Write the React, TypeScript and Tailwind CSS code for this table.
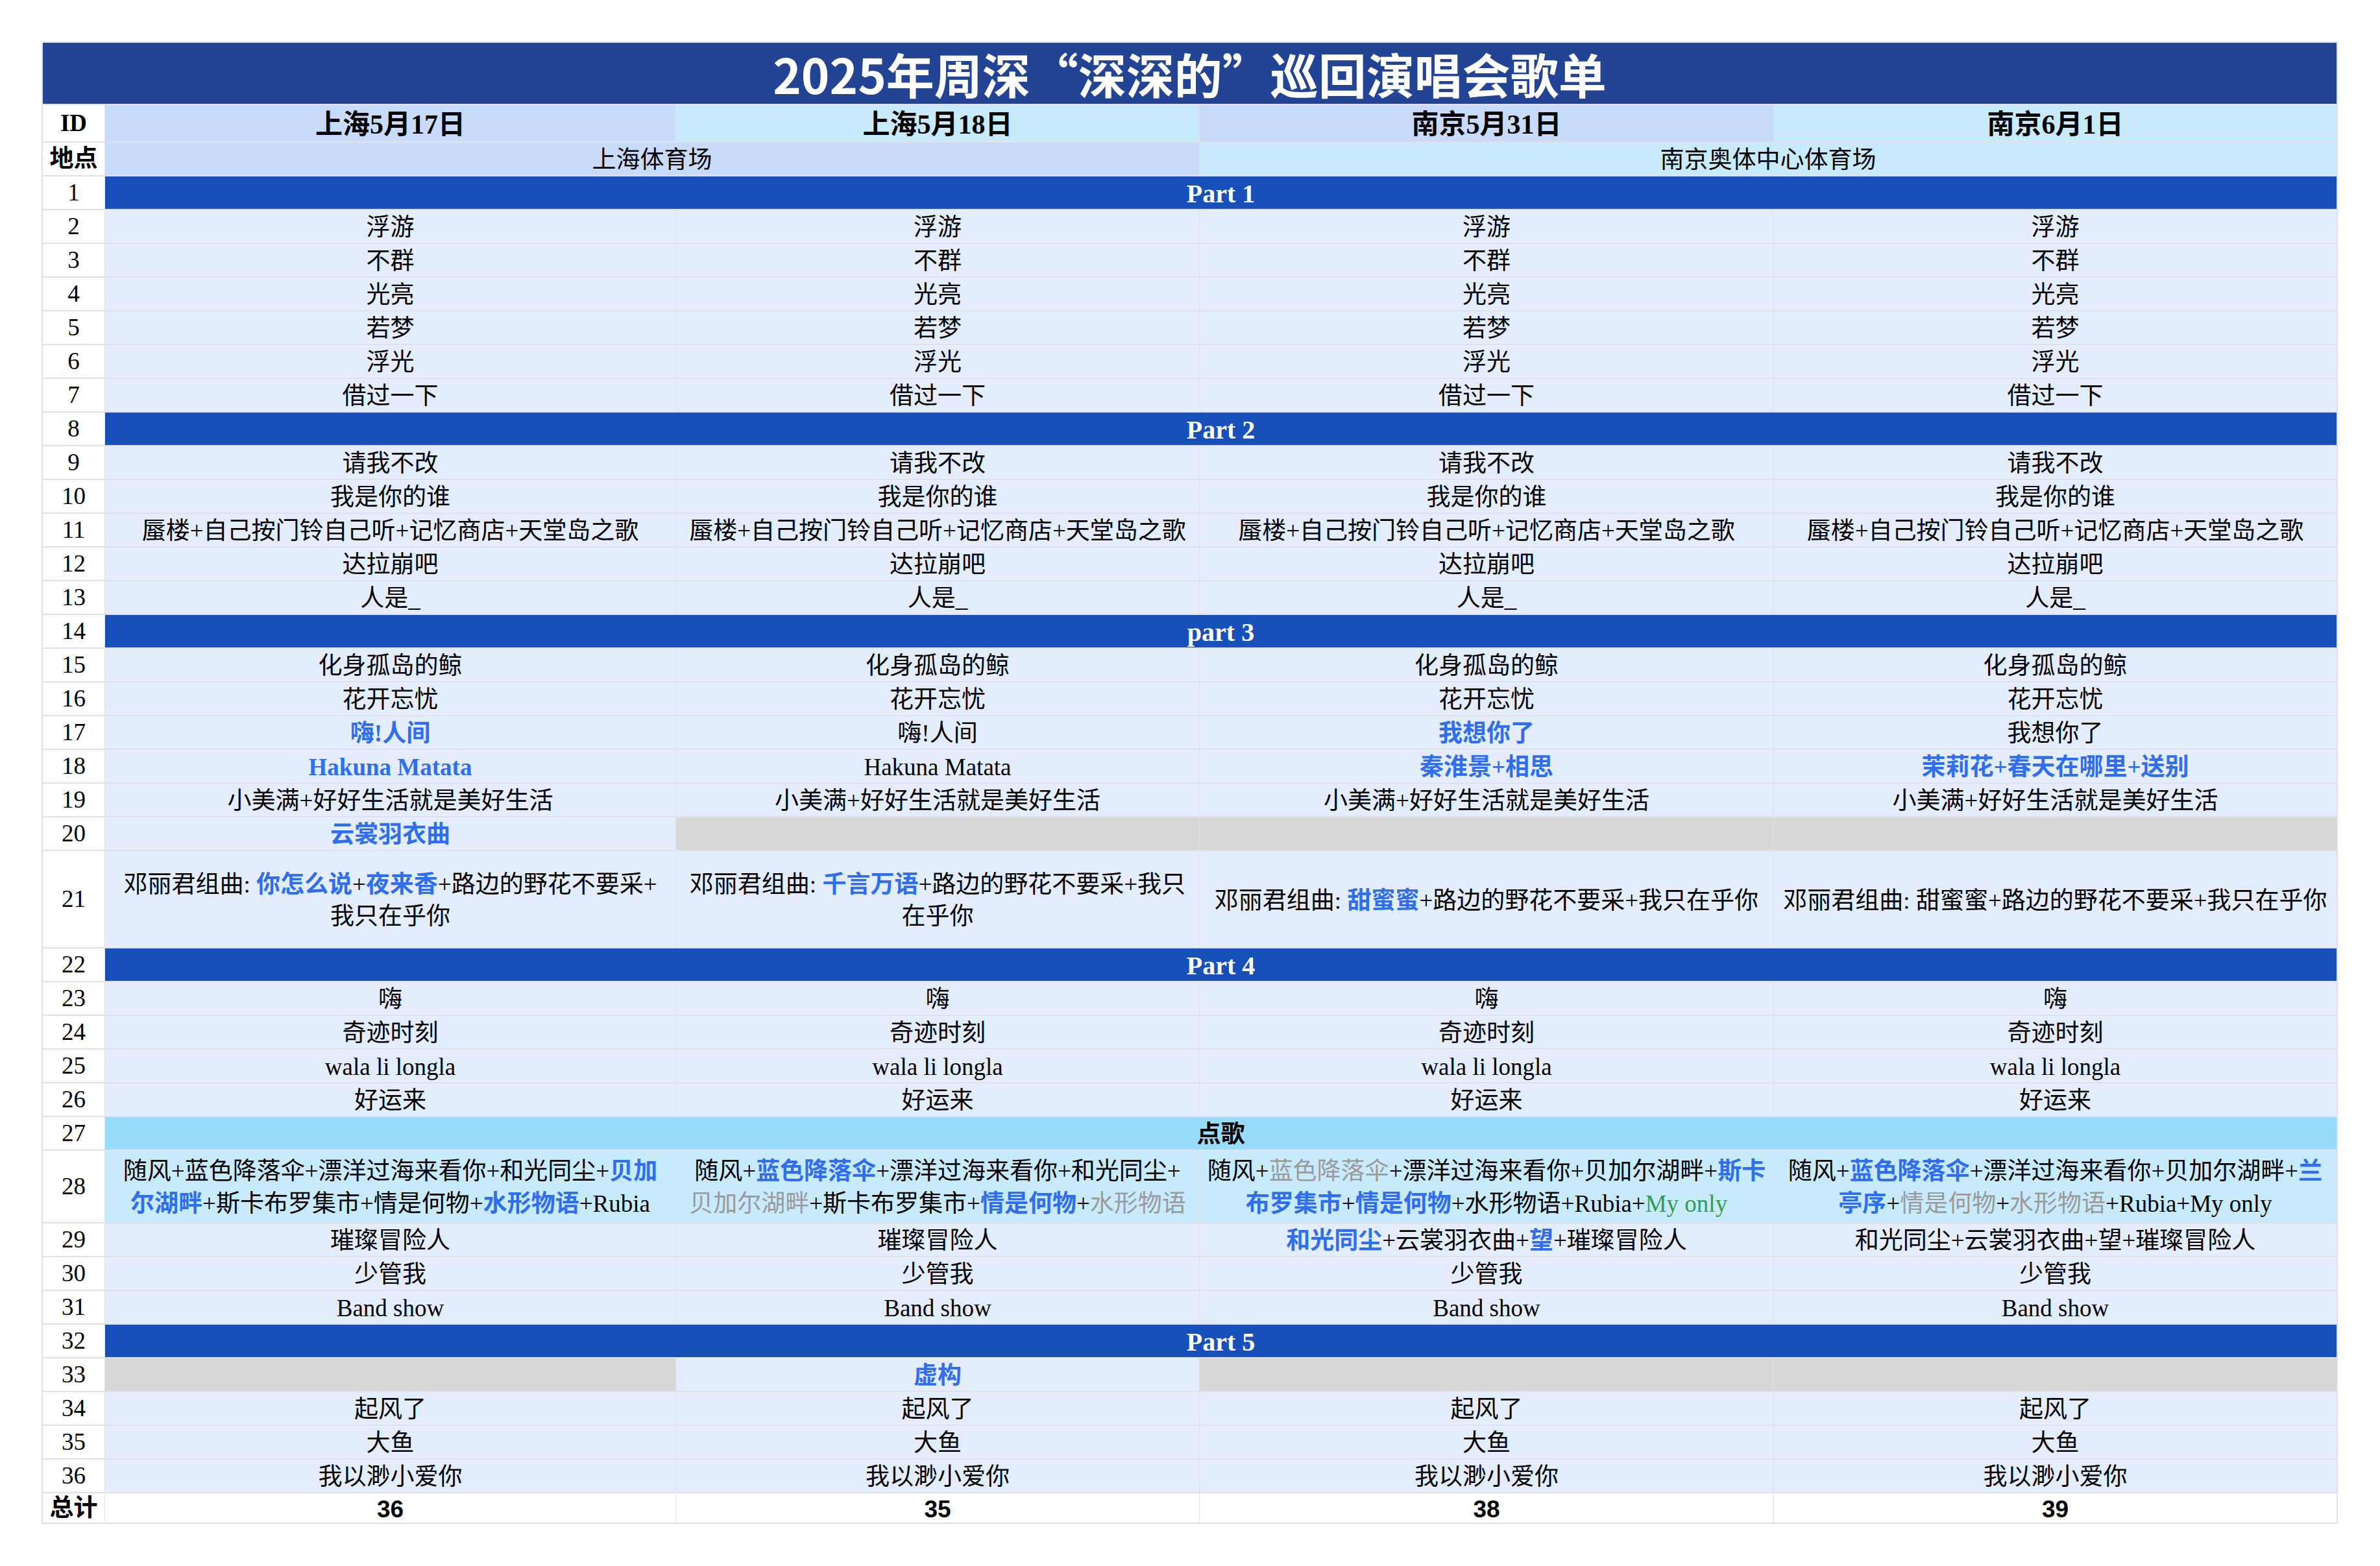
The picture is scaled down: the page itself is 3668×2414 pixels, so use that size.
import React from "react";

type Seg = string | { t: string; c: "b" | "g" | "gr" } | { br: true };
type Cell = { segs: Seg[]; bg?: "gray" | "cyan" };
type Row =
  | { kind: "part"; id: number; label: string; sky?: boolean }
  | { kind: "song"; id: number; cells: Cell[]; size?: "r21" | "r28" };

const b = (t: string): Seg => ({ t, c: "b" });
const g = (t: string): Seg => ({ t, c: "g" });
const gr = (t: string): Seg => ({ t, c: "gr" });
const BR: Seg = { br: true };

const same = (s: string): Cell[] => [{ segs: [s] }, { segs: [s] }, { segs: [s] }, { segs: [s] }];

const rows: Row[] = [
  { kind: "part", id: 1, label: "Part 1" },
  { kind: "song", id: 2, cells: same("浮游") },
  { kind: "song", id: 3, cells: same("不群") },
  { kind: "song", id: 4, cells: same("光亮") },
  { kind: "song", id: 5, cells: same("若梦") },
  { kind: "song", id: 6, cells: same("浮光") },
  { kind: "song", id: 7, cells: same("借过一下") },
  { kind: "part", id: 8, label: "Part 2" },
  { kind: "song", id: 9, cells: same("请我不改") },
  { kind: "song", id: 10, cells: same("我是你的谁") },
  { kind: "song", id: 11, cells: same("蜃楼+自己按门铃自己听+记忆商店+天堂岛之歌") },
  { kind: "song", id: 12, cells: same("达拉崩吧") },
  { kind: "song", id: 13, cells: same("人是_") },
  { kind: "part", id: 14, label: "part 3" },
  { kind: "song", id: 15, cells: same("化身孤岛的鲸") },
  { kind: "song", id: 16, cells: same("花开忘忧") },
  {
    kind: "song",
    id: 17,
    cells: [{ segs: [b("嗨!人间")] }, { segs: ["嗨!人间"] }, { segs: [b("我想你了")] }, { segs: ["我想你了"] }],
  },
  {
    kind: "song",
    id: 18,
    cells: [
      { segs: [b("Hakuna Matata")] },
      { segs: ["Hakuna Matata"] },
      { segs: [b("秦淮景+相思")] },
      { segs: [b("茉莉花+春天在哪里+送别")] },
    ],
  },
  { kind: "song", id: 19, cells: same("小美满+好好生活就是美好生活") },
  {
    kind: "song",
    id: 20,
    cells: [{ segs: [b("云裳羽衣曲")] }, { segs: [], bg: "gray" }, { segs: [], bg: "gray" }, { segs: [], bg: "gray" }],
  },
  {
    kind: "song",
    id: 21,
    size: "r21",
    cells: [
      { segs: ["邓丽君组曲: ", b("你怎么说"), "+", b("夜来香"), "+路边的野花不要采+", BR, "我只在乎你"] },
      { segs: ["邓丽君组曲: ", b("千言万语"), "+路边的野花不要采+我只", BR, "在乎你"] },
      { segs: ["邓丽君组曲: ", b("甜蜜蜜"), "+路边的野花不要采+我只在乎你"] },
      { segs: ["邓丽君组曲: 甜蜜蜜+路边的野花不要采+我只在乎你"] },
    ],
  },
  { kind: "part", id: 22, label: "Part 4" },
  { kind: "song", id: 23, cells: same("嗨") },
  { kind: "song", id: 24, cells: same("奇迹时刻") },
  { kind: "song", id: 25, cells: same("wala li longla") },
  { kind: "song", id: 26, cells: same("好运来") },
  { kind: "part", id: 27, label: "点歌", sky: true },
  {
    kind: "song",
    id: 28,
    size: "r28",
    cells: [
      {
        bg: "cyan",
        segs: ["随风+蓝色降落伞+漂洋过海来看你+和光同尘+", b("贝加"), BR, b("尔湖畔"), "+斯卡布罗集市+情是何物+", b("水形物语"), "+Rubia"],
      },
      {
        bg: "cyan",
        segs: ["随风+", b("蓝色降落伞"), "+漂洋过海来看你+和光同尘+", BR, g("贝加尔湖畔"), "+斯卡布罗集市+", b("情是何物"), "+", g("水形物语")],
      },
      {
        bg: "cyan",
        segs: ["随风+", g("蓝色降落伞"), "+漂洋过海来看你+贝加尔湖畔+", b("斯卡"), BR, b("布罗集市"), "+", b("情是何物"), "+水形物语+Rubia+", gr("My only")],
      },
      {
        bg: "cyan",
        segs: ["随风+", b("蓝色降落伞"), "+漂洋过海来看你+贝加尔湖畔+", b("兰"), BR, b("亭序"), "+", g("情是何物"), "+", g("水形物语"), "+Rubia+My only"],
      },
    ],
  },
  {
    kind: "song",
    id: 29,
    cells: [
      { segs: ["璀璨冒险人"] },
      { segs: ["璀璨冒险人"] },
      { segs: [b("和光同尘"), "+云裳羽衣曲+", b("望"), "+璀璨冒险人"] },
      { segs: ["和光同尘+云裳羽衣曲+望+璀璨冒险人"] },
    ],
  },
  { kind: "song", id: 30, cells: same("少管我") },
  { kind: "song", id: 31, cells: same("Band show") },
  { kind: "part", id: 32, label: "Part 5" },
  {
    kind: "song",
    id: 33,
    cells: [{ segs: [], bg: "gray" }, { segs: [b("虚构")] }, { segs: [], bg: "gray" }, { segs: [], bg: "gray" }],
  },
  { kind: "song", id: 34, cells: same("起风了") },
  { kind: "song", id: 35, cells: same("大鱼") },
  { kind: "song", id: 36, cells: same("我以渺小爱你") },
];

const SERIF = "font-['Liberation_Serif','Noto_Sans_CJK_SC',serif]";

function renderSegs(segs: Seg[]) {
  return segs.map((s, i) => {
    if (typeof s === "string") return <span key={i}>{s}</span>;
    if ("br" in s) return <br key={i} />;
    if (s.c === "b")
      return (
        <span key={i} className="font-bold text-[#2f6ef0]">
          {s.t}
        </span>
      );
    if (s.c === "g")
      return (
        <span key={i} className="text-[#9a9a9a]">
          {s.t}
        </span>
      );
    return (
      <span key={i} className="text-[#2f9e4f]">
        {s.t}
      </span>
    );
  });
}

function IdCell({ children, bold }: { children: React.ReactNode; bold?: boolean }) {
  return (
    <div
      className={`flex items-center justify-center bg-white text-[37px] leading-[50px] text-black ${
        bold ? "font-bold" : ""
      }`}
    >
      {children}
    </div>
  );
}

export default function App() {
  return (
    <div className={`min-h-screen bg-white pt-[64px] pl-[64px] ${SERIF}`}>
      <div className="grid w-max bg-[#e0e0e6] p-[2px] gap-x-[1px] gap-y-[2px] grid-cols-[95px_879px_806px_884px_867px] grid-rows-[94px_56px_repeat(21,50px)_148px_repeat(6,50px)_110px_repeat(8,50px)_45px]">
        {/* Title */}
        <div className="col-span-5 flex items-center justify-center bg-[#234494] font-['Noto_Sans_CJK_SC',sans-serif] text-[74px] font-bold leading-none text-white">
          2025年周深“深深的”巡回演唱会歌单
        </div>

        {/* Header dates */}
        <IdCell bold>ID</IdCell>
        <div className="flex items-center justify-center bg-[#c9dbfb] pt-[4px] text-[42px] font-bold leading-none text-black">上海5月17日</div>
        <div className="flex items-center justify-center bg-[#c8eafd] pt-[4px] text-[42px] font-bold leading-none text-black">上海5月18日</div>
        <div className="flex items-center justify-center bg-[#c9dbfb] pt-[4px] text-[42px] font-bold leading-none text-black">南京5月31日</div>
        <div className="flex items-center justify-center bg-[#c8eafd] pt-[4px] text-[42px] font-bold leading-none text-black">南京6月1日</div>

        {/* Venue */}
        <IdCell bold>地点</IdCell>
        <div className="col-span-2 flex items-center justify-center bg-[#c9dbfb] pt-[4px] text-[37px] leading-[50px] text-black">上海体育场</div>
        <div className="col-span-2 flex items-center justify-center bg-[#c8eafd] pt-[4px] text-[37px] leading-[50px] text-black">南京奥体中心体育场</div>

        {rows.map((r) => {
          if (r.kind === "part") {
            return (
              <React.Fragment key={r.id}>
                <IdCell>{r.id}</IdCell>
                {r.sky ? (
                  <div className="col-span-4 flex items-center justify-center bg-[#98dcfd] pt-[4px] text-[37px] font-bold leading-[46px] text-black">
                    {r.label}
                  </div>
                ) : (
                  <div className="col-span-4 flex items-center justify-center bg-[#1750b8] pt-[4px] text-[40px] font-bold leading-[46px] text-white">
                    {r.label}
                  </div>
                )}
              </React.Fragment>
            );
          }
          const lh = r.size === "r21" ? "leading-[49px]" : "leading-[50px]";
          return (
            <React.Fragment key={r.id}>
              <IdCell>{r.id}</IdCell>
              {r.cells.map((c, i) => (
                <div
                  key={i}
                  className={`flex items-center justify-center whitespace-nowrap pt-[4px] text-center text-[37px] ${lh} text-black ${
                    c.bg === "gray" ? "bg-[#d8d8d8]" : c.bg === "cyan" ? "bg-[#c8eafd]" : "bg-[#e3edfd]"
                  }`}
                >
                  <div>{renderSegs(c.segs)}</div>
                </div>
              ))}
            </React.Fragment>
          );
        })}

        {/* Totals */}
        <IdCell bold>总计</IdCell>
        {["36", "35", "38", "39"].map((t) => (
          <div
            key={t}
            className="flex items-center justify-center bg-white pt-[4px] font-['Liberation_Sans',sans-serif] text-[37px] font-bold leading-none text-black"
          >
            {t}
          </div>
        ))}
      </div>
    </div>
  );
}
